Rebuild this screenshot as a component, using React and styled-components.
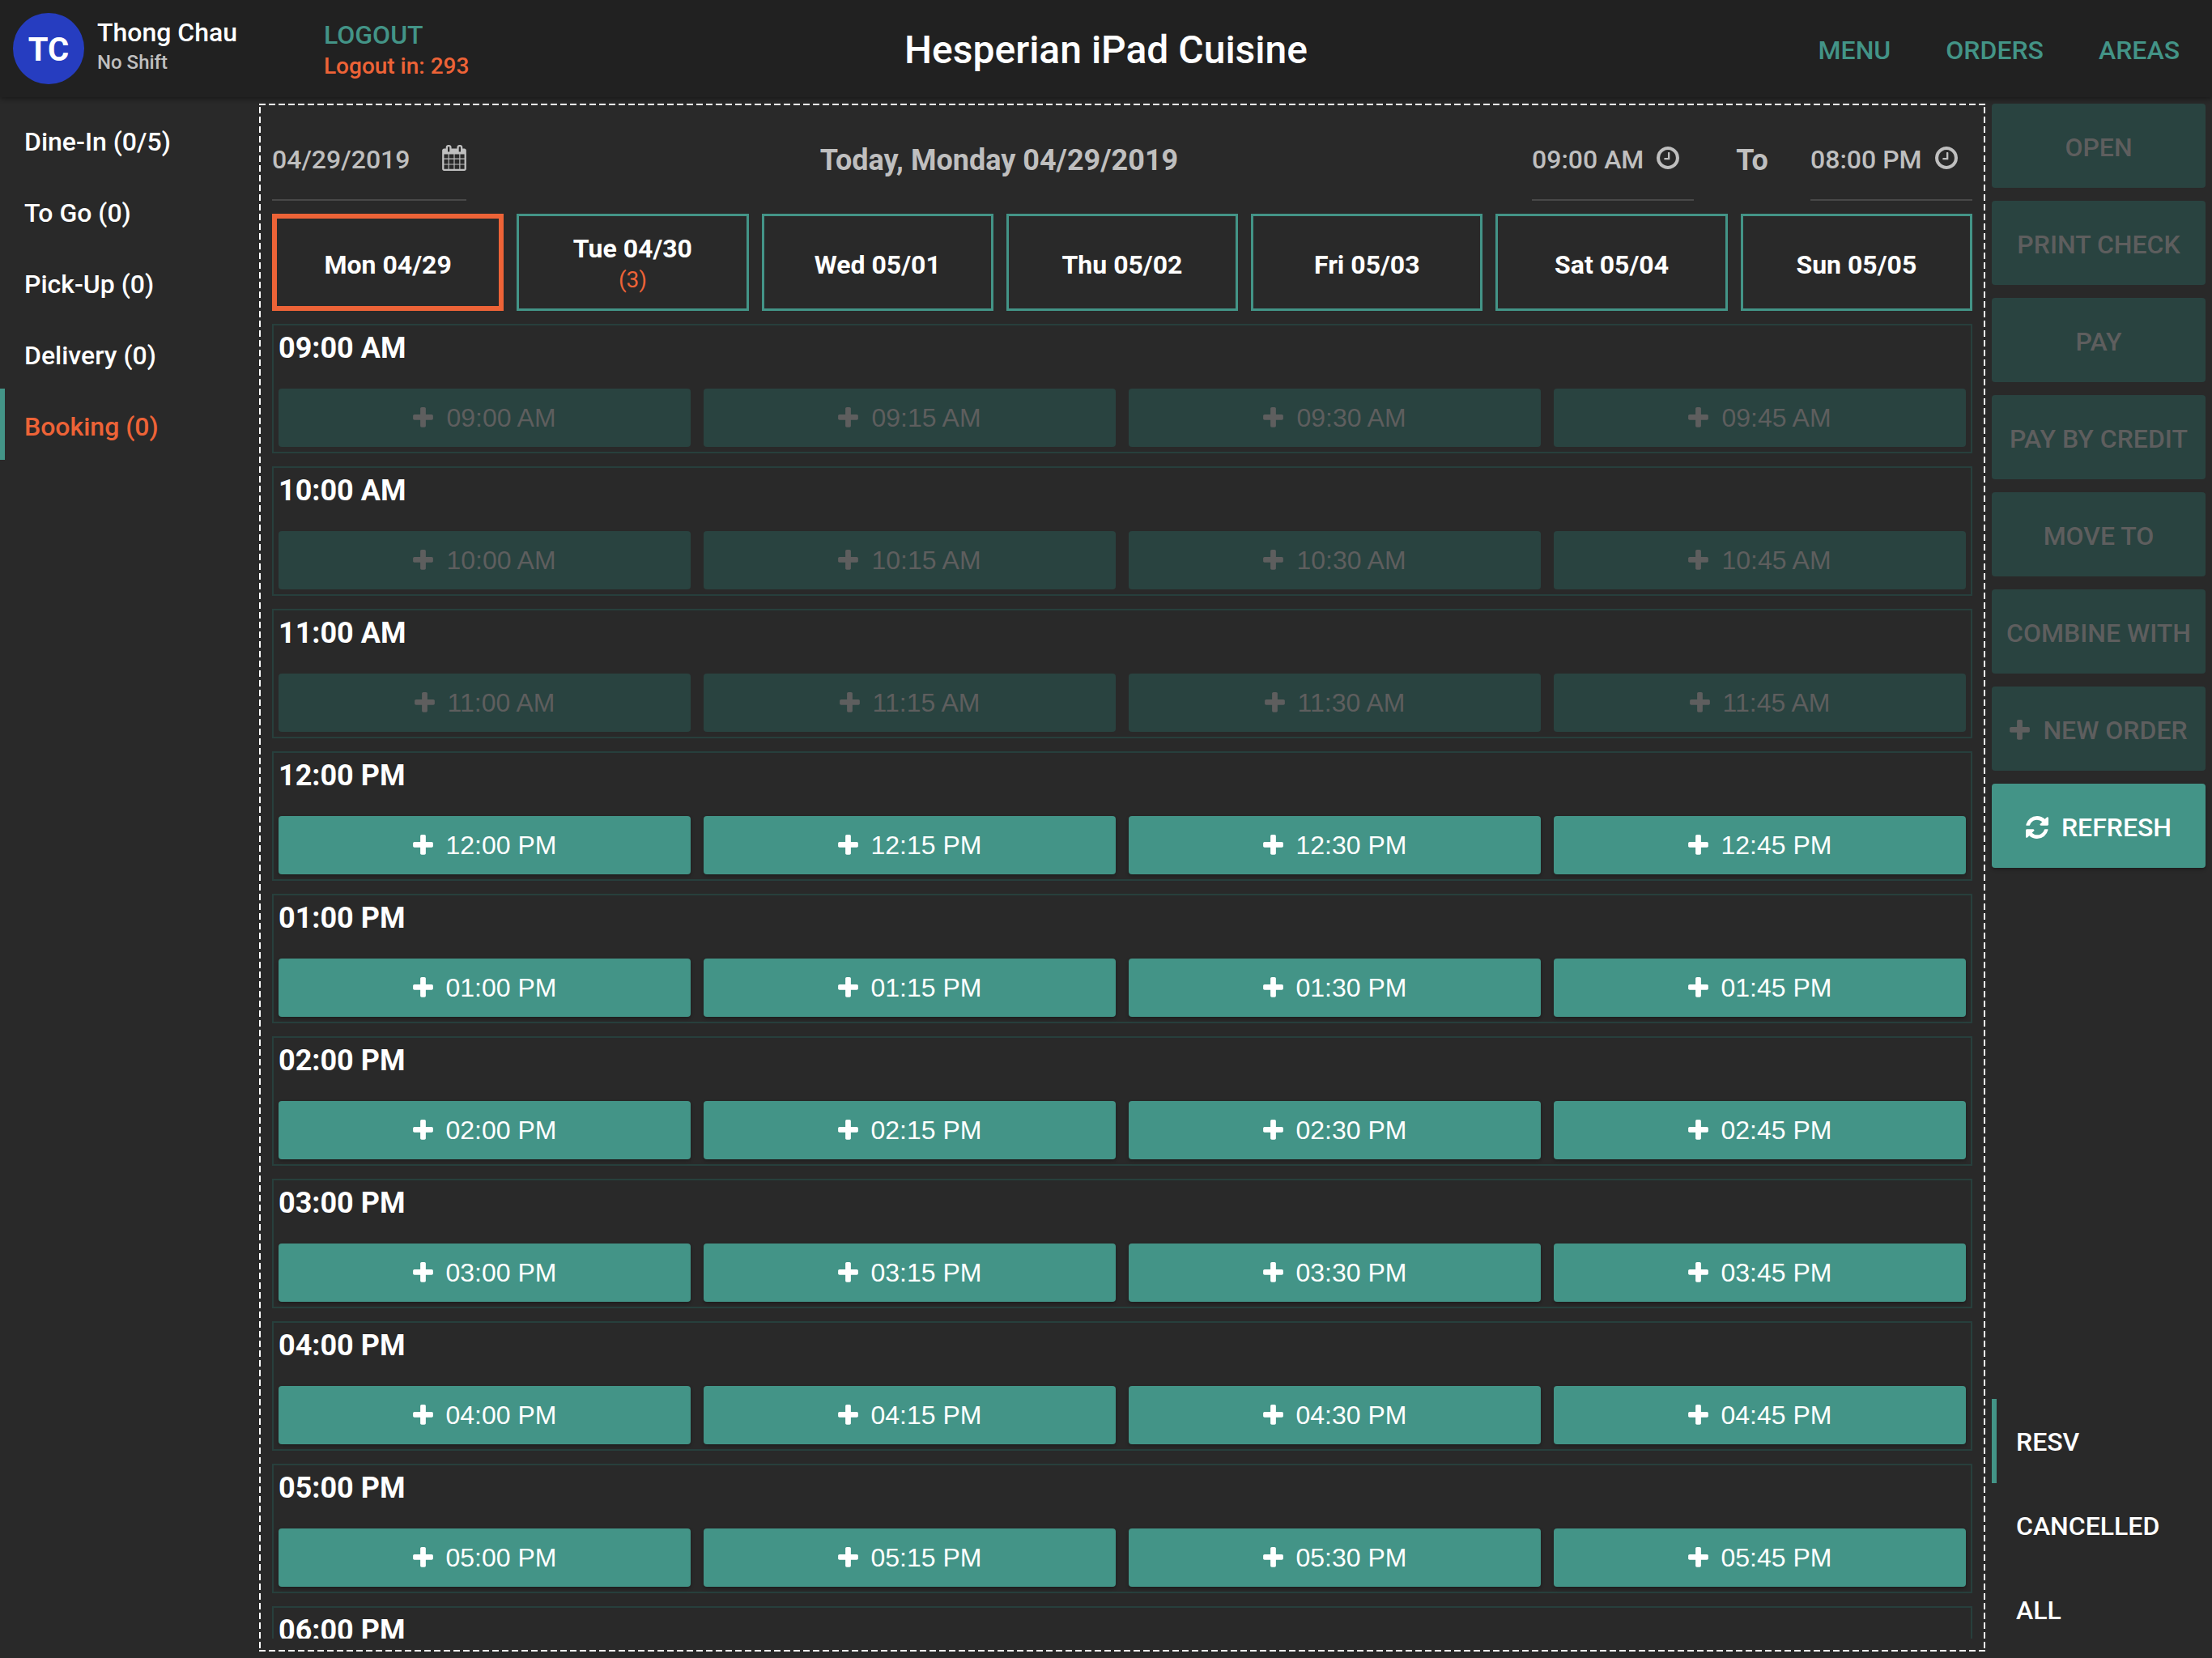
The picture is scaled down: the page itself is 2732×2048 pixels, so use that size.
import React, { useState } from 'react'
import styled, { createGlobalStyle, css } from 'styled-components';

const teal = '#439487'
const orange = '#ed6337'
const muted = '#bfbfbf'

const GlobalStyle = createGlobalStyle`
    * {
        box-sizing: border-box;
    }

    body {
        margin: 0;
        background: #292929;
        color: white;
        font-family: Roboto, "Liberation Sans", sans-serif;
        font-size: 32px;
        font-weight: 500;
        line-height: 38px;
    }

    button, input {
        margin: 0;
        padding: 0;
        border: none;
        border-radius: 0;
        background: transparent;
        color: inherit;
        font: inherit;
    }

    button {
        cursor: pointer;
    }
`

const Page = styled.div`
    display: flex;
    flex-direction: column;
    height: 100vh;
    overflow: hidden;
`

const Header = styled.header`
    display: grid;
    grid-template-columns: 1fr auto 1fr;
    align-items: center;
    flex: none;
    height: 120px;
    padding: 0 16px;
    background: #212121;
    box-shadow: 0 2px 6px rgba(0, 0, 0, 0.4);
    z-index: 1;
`

const HeaderLeft = styled.div`
    display: flex;
    align-items: center;
`

const Avatar = styled.div`
    display: flex;
    justify-content: center;
    align-items: center;
    width: 88px;
    height: 88px;
    padding-top: 4px;
    border-radius: 50%;
    background: #263dc0;
    font-size: 40px;
    font-weight: 700;
`

const UserInfo = styled.div`
    width: 280px;
    margin-left: 16px;
    padding-bottom: 4px;
`

const UserShift = styled.div`
    color: ${muted};
    font-size: 24px;
    line-height: 36px;
`

const Logout = styled.div`
    padding-top: 6px;
`

const LogoutButton = styled.button`
    display: block;
    color: ${teal};
`

const LogoutTimer = styled.div`
    color: ${orange};
    font-size: 28px;
    line-height: 40px;
`

const Title = styled.h1`
    margin: 0;
    padding-top: 4px;
    font-size: 48px;
    font-weight: 500;
    line-height: 56px;
`

const Nav = styled.nav`
    display: flex;
    justify-content: flex-end;
    gap: 68px;
    padding: 4px 24px 0 0;
`

const NavLink = styled.a`
    color: ${teal};
    text-decoration: none;
`

const Content = styled.div`
    display: flex;
    flex: 1;
    min-height: 0;
    padding: 8px 8px 8px 0;
`

const Sidebar = styled.nav`
    display: flex;
    flex-direction: column;
    flex: none;
    width: 320px;
`

const Tab = styled.button`
    display: flex;
    align-items: center;
    height: ${({ $tall }) => $tall ? '104px' : '88px'};
    padding: ${({ $tall }) => $tall ? '2px' : '6px'} 0 0 24px;
    border-left: 6px solid ${({ $active }) => $active ? teal : 'transparent'};
    color: ${({ $highlight }) => $highlight ? orange : 'white'};
`

const dashX = 'repeating-linear-gradient(to right, white 0 8px, transparent 8px 12px)'
const dashY = 'repeating-linear-gradient(to bottom, transparent 0 4px, white 4px 12px)'

// the dashes are 8px long with a 4px gap, which border-style can't do
const Board = styled.main`
    display: flex;
    flex-direction: column;
    flex: 1;
    min-width: 0;
    gap: 16px;
    padding: 16px;
    background:
        ${dashX} top / 100% 2px no-repeat,
        ${dashX} bottom / 100% 2px no-repeat,
        ${dashY} left / 2px 100% no-repeat,
        ${dashY} right / 2px 100% no-repeat;
`

const Filters = styled.div`
    display: flex;
    flex: none;
    height: 104px;
    color: ${muted};
`

const Field = styled.label`
    display: flex;
    align-items: center;
    flex: none;
    width: ${({ $width }) => $width};
    border-bottom: 2px solid #484848;
`

const FieldInput = styled.input`
    width: ${({ $width }) => $width};
    height: 42px;
    padding-top: 4px;
    outline: none;
`

const FilterText = styled.div`
    display: flex;
    justify-content: center;
    align-items: center;
    flex: ${({ $width }) => $width ? 'none' : 1};
    width: ${({ $width }) => $width};
    padding-top: 4px;
    font-size: 36px;
    font-weight: 700;
`

const Days = styled.div`
    display: grid;
    grid-template-columns: repeat(7, 1fr);
    flex: none;
    gap: 16px;
`

const Day = styled.button`
    display: flex;
    flex-direction: column;
    justify-content: center;
    align-items: center;
    height: 120px;
    padding-top: 6px;
    border: ${({ $active }) => $active ? `6px solid ${orange}` : `3px solid ${teal}`};
    font-weight: 700;
`

const DayCount = styled.span`
    color: ${orange};
    font-size: 28px;
    font-weight: 400;
    line-height: 40px;
`

const Hours = styled.div`
    display: flex;
    flex-direction: column;
    flex: 1;
    min-height: 0;
    gap: 16px;
    overflow-y: auto;
    scrollbar-width: none;
`

const Hour = styled.section`
    flex: none;
    padding: 6px;
    border: 2px solid #273f3c;
`

const HourTitle = styled.h2`
    height: 72px;
    margin: 0;
    font-size: 36px;
    font-weight: 700;
    line-height: 44px;
`

const Slots = styled.div`
    display: grid;
    grid-template-columns: repeat(4, 1fr);
    gap: 16px;
`

const filled = css`
    display: flex;
    justify-content: center;
    align-items: center;
    gap: 16px;
    border-radius: 4px;
    background: ${teal};
    box-shadow: 0 2px 4px rgba(0, 0, 0, 0.3);

    &:disabled {
        background: #294340;
        box-shadow: none;
        color: #5e5e5e;
        cursor: default;
    }
`

const Slot = styled.button`
    ${filled}
    height: 72px;
    font-family: "Liberation Sans", Arial, sans-serif;
    font-weight: 400;
`

const Actions = styled.aside`
    display: flex;
    flex-direction: column;
    flex: none;
    gap: 16px;
    width: 264px;
    margin-left: 8px;
`

const Action = styled.button`
    ${filled}
    height: 104px;
    padding-top: 4px;
    white-space: nowrap;
`

const StatusTabs = styled.div`
    display: flex;
    flex-direction: column;
    margin-top: auto;
`

const Svg = styled.svg`
    display: block;
    flex: none;
    fill: currentColor;
`

function PlusIcon() {
    return (
        <Svg width="25" height="27" viewBox="192 128 1408 1536" aria-hidden="true">
            <path d="M1600 736v192q0 40-28 68t-68 28h-416v416q0 40-28 68t-68 28h-192q-40 0-68-28t-28-68v-416h-416q-40 0-68-28t-28-68v-192q0-40 28-68t68-28h416v-416q0-40 28-68t68-28h192q40 0 68 28t28 68v416h416q40 0 68 28t28 68z" />
        </Svg>
    );
}

function RefreshIcon() {
    return (
        <Svg width="28" height="28" viewBox="128 128 1536 1536" aria-hidden="true">
            <path d="M1639 1056q0 5-1 7-64 268-268 434.5t-478 166.5q-146 0-282.5-55t-243.5-157l-129 129q-19 19-45 19t-45-19-19-45v-448q0-26 19-45t45-19h448q26 0 45 19t19 45-19 45l-137 137q71 66 161 102t187 36q134 0 250-65t186-179q11-17 53-117 8-23 30-23h192q13 0 22.5 9.5t9.5 22.5zm25-800v448q0 26-19 45t-45 19h-448q-26 0-45-19t-19-45 19-45l138-138q-148-137-349-137-134 0-250 65t-186 179q-11 17-53 117-8 23-30 23h-199q-13 0-22.5-9.5t-9.5-22.5v-7q65-268 270-434.5t480-166.5q146 0 284 55.5t245 156.5l130-129q19-19 45-19t45 19 19 45z" />
        </Svg>
    );
}

function CalendarIcon() {
    return (
        <Svg width="30" height="32" viewBox="64 0 1664 1792" aria-hidden="true">
            <path d="M192 1664h288v-288h-288v288zm352 0h320v-288h-320v288zm-352-352h288v-320h-288v320zm352 0h320v-320h-320v320zm-352-384h288v-288h-288v288zm736 736h320v-288h-320v288zm-384-736h320v-288h-320v288zm768 736h288v-288h-288v288zm-384-352h320v-320h-320v320zm-352-864v-288q0-13-9.5-22.5t-22.5-9.5h-64q-13 0-22.5 9.5t-9.5 22.5v288q0 13 9.5 22.5t22.5 9.5h64q13 0 22.5-9.5t9.5-22.5zm736 864h288v-320h-288v320zm-384-384h320v-288h-320v288zm384 0h288v-288h-288v288zm32-480v-288q0-13-9.5-22.5t-22.5-9.5h-64q-13 0-22.5 9.5t-9.5 22.5v288q0 13 9.5 22.5t22.5 9.5h64q13 0 22.5-9.5t9.5-22.5zm384-64v1280q0 52-38 90t-90 38h-1408q-52 0-90-38t-38-90v-1280q0-52 38-90t90-38h128v-96q0-66 47-113t113-47h64q66 0 113 47t47 113v96h384v-96q0-66 47-113t113-47h64q66 0 113 47t47 113v96h128q52 0 90 38t38 90z" />
        </Svg>
    );
}

function ClockIcon() {
    return (
        <Svg width="28" height="28" viewBox="128 128 1536 1536" aria-hidden="true">
            <path d="M1024 544v448q0 14-9 23t-23 9h-320q-14 0-23-9t-9-23v-64q0-14 9-23t23-9h224v-352q0-14 9-23t23-9h64q14 0 23 9t9 23zm416 352q0-148-73-273t-198-198-273-73-273 73-198 198-73 273 73 273 198 198 273 73 273-73 198-198 73-273zm224 0q0 209-103 385.5t-279.5 279.5-385.5 103-385.5-103-279.5-279.5-103-385.5 103-385.5 279.5-279.5 385.5-103 385.5 103 279.5 279.5 103 385.5z" />
        </Svg>
    );
}

const orderTypes = ['Dine-In (0/5)', 'To Go (0)', 'Pick-Up (0)', 'Delivery (0)', 'Booking (0)']

const days = [
    { label: 'Mon 04/29' },
    { label: 'Tue 04/30', count: 3 },
    { label: 'Wed 05/01' },
    { label: 'Thu 05/02' },
    { label: 'Fri 05/03' },
    { label: 'Sat 05/04' },
    { label: 'Sun 05/05' }
]

const hours = [
    { hour: '09', period: 'AM', past: true },
    { hour: '10', period: 'AM', past: true },
    { hour: '11', period: 'AM', past: true },
    { hour: '12', period: 'PM' },
    { hour: '01', period: 'PM' },
    { hour: '02', period: 'PM' },
    { hour: '03', period: 'PM' },
    { hour: '04', period: 'PM' },
    { hour: '05', period: 'PM' },
    { hour: '06', period: 'PM' }
]

const quarters = ['00', '15', '30', '45']

const actions = ['OPEN', 'PRINT CHECK', 'PAY', 'PAY BY CREDIT', 'MOVE TO', 'COMBINE WITH']

const statuses = ['RESV', 'CANCELLED', 'ALL']

function HourBlock({ hour, period, past }) {
    return (
        <Hour>
            <HourTitle>{`${hour}:00 ${period}`}</HourTitle>
            <Slots>
            {
                quarters.map(quarter => (
                    <Slot key={quarter} disabled={past}>
                        <PlusIcon />
                        {`${hour}:${quarter} ${period}`}
                    </Slot>
                ))
            }
            </Slots>
        </Hour>
    );
}

function TimeField({ label, value }) {
    return (
        <Field $width="200px">
            <FieldInput $width="154px" aria-label={label} defaultValue={value} />
            <ClockIcon />
        </Field>
    );
}

export default function App() {
    const [type, setType] = useState('Booking (0)')
    const [day, setDay] = useState('Mon 04/29')
    const [status, setStatus] = useState('RESV')

    return (
        <Page>
            <GlobalStyle />
            <Header>
                <HeaderLeft>
                    <Avatar>TC</Avatar>
                    <UserInfo>
                        <div>Thong Chau</div>
                        <UserShift>No Shift</UserShift>
                    </UserInfo>
                    <Logout>
                        <LogoutButton>LOGOUT</LogoutButton>
                        <LogoutTimer>Logout in: 293</LogoutTimer>
                    </Logout>
                </HeaderLeft>
                <Title>Hesperian iPad Cuisine</Title>
                <Nav>
                    <NavLink href="#menu">MENU</NavLink>
                    <NavLink href="#orders">ORDERS</NavLink>
                    <NavLink href="#areas">AREAS</NavLink>
                </Nav>
            </Header>
            <Content>
                <Sidebar>
                {
                    orderTypes.map(item => (
                        <Tab key={item} $active={item === type} $highlight={item === type} onClick={() => setType(item)}>
                            {item}
                        </Tab>
                    ))
                }
                </Sidebar>
                <Board>
                    <Filters>
                        <Field $width="240px">
                            <FieldInput $width="210px" aria-label="Date" defaultValue="04/29/2019" />
                            <CalendarIcon />
                        </Field>
                        <FilterText>Today, Monday 04/29/2019</FilterText>
                        <TimeField label="From" value="09:00 AM" />
                        <FilterText $width="144px">To</FilterText>
                        <TimeField label="To" value="08:00 PM" />
                    </Filters>
                    <Days>
                    {
                        days.map(({ label, count }) => (
                            <Day key={label} $active={label === day} onClick={() => setDay(label)}>
                                {label}
                                {count && <DayCount>({count})</DayCount>}
                            </Day>
                        ))
                    }
                    </Days>
                    <Hours>
                        {hours.map(item => <HourBlock key={item.hour} {...item} />)}
                    </Hours>
                </Board>
                <Actions>
                    {actions.map(action => <Action key={action} disabled>{action}</Action>)}
                    <Action disabled><PlusIcon />NEW ORDER</Action>
                    <Action><RefreshIcon />REFRESH</Action>
                    <StatusTabs>
                    {
                        statuses.map(item => (
                            <Tab key={item} $tall $active={item === status} onClick={() => setStatus(item)}>
                                {item}
                            </Tab>
                        ))
                    }
                    </StatusTabs>
                </Actions>
            </Content>
        </Page>
    );
}
